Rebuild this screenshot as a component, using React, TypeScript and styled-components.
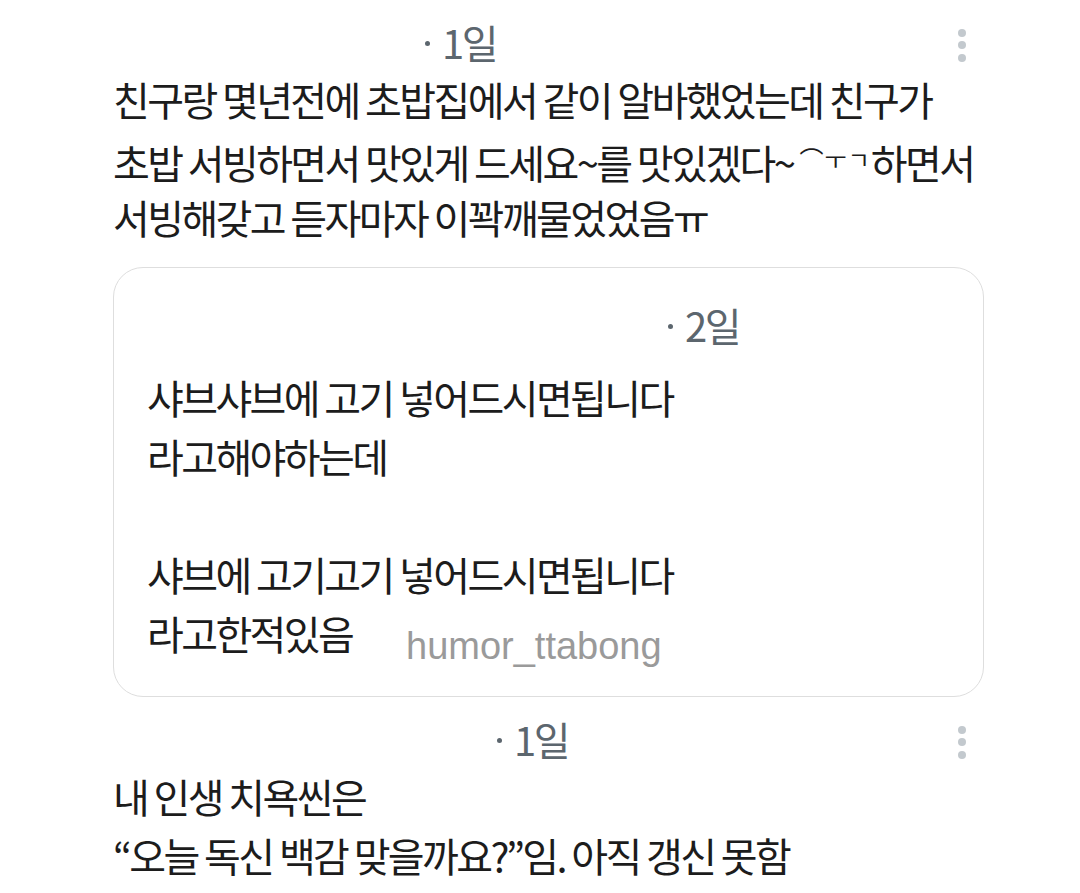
import React from "react";
import styled, { createGlobalStyle } from "styled-components";

const Global = createGlobalStyle`
  html, body { margin: 0; padding: 0; background: #ffffff; }
  body { font-family: "Noto Sans CJK KR", "Noto Sans", sans-serif; color: #1a1a1a; }
`;

const Page = styled.div`
  width: 1080px;
  height: 893px;
  overflow: hidden;
  box-sizing: border-box;
  padding: 14px 96px 0 113px;
  display: flex;
  flex-direction: column;
`;

const Comment = styled.section<{ $gap?: number }>`
  display: flex;
  flex-direction: column;
  margin-top: ${(p) => p.$gap ?? 0}px;
`;

const Header = styled.div`
  display: flex;
  align-items: center;
  height: 56px;
  padding-right: 18px;
`;

const Name = styled.span<{ $w: number }>`
  display: inline-block;
  width: ${(p) => p.$w}px;
  flex: none;
`;

const Time = styled.span`
  display: inline-flex;
  align-items: center;
  font-size: 40px;
  letter-spacing: -2.5px;
  color: #5c666e;
  line-height: 1;
`;

const Dot = styled.span`
  display: inline-block;
  width: 5px;
  height: 5px;
  border-radius: 50%;
  background: #5c666e;
  margin: 2px 12px 0 0;
`;

const More = styled.button`
  margin-left: auto;
  align-self: center;
  margin-top: 6px;
  border: 0;
  background: none;
  padding: 0;
  width: 8px;
  height: 33px;
  display: flex;
  flex-direction: column;
  justify-content: space-between;
  align-items: center;
`;

const Pip = styled.span`
  width: 8px;
  height: 8px;
  border-radius: 50%;
  background: #c3c9ce;
`;

const Body = styled.div`
  font-size: 40px;
  letter-spacing: -2.6px;
  line-height: 59px;
  color: #1c1c1c;
  white-space: nowrap;
`;

const Line = styled.div`
  height: 59px;
`;

const Small = styled.span`
  font-size: 24px;
  vertical-align: 10px;
  letter-spacing: 1px;
`;

const Card = styled.div`
  position: relative;
  margin-top: 20px;
  border: 1px solid #dedede;
  border-radius: 30px;
  padding: 29px 0 33px 33px;
  display: flex;
  flex-direction: column;
`;

const CardHeader = styled(Header)`
  margin-bottom: 15px;
`;

const Watermark = styled.span`
  position: absolute;
  left: 292px;
  top: 357px;
  font-family: "Liberation Sans", Arial, sans-serif;
  font-size: 38px;
  color: #9a9a9a;
  letter-spacing: 0;
`;

function Stamp({ name, label }: { name: number; label: string }) {
  return (
    <>
      <Name $w={name} />
      <Time>
        <Dot />
        {label}
      </Time>
    </>
  );
}

function Dots() {
  return (
    <More aria-label="more">
      <Pip />
      <Pip />
      <Pip />
    </More>
  );
}

export default function App() {
  return (
    <>
      <Global />
      <Page>
        <Comment>
          <Header>
            <Stamp name={312} label="1일" />
            <Dots />
          </Header>
          <Body>
            <Line>친구랑 몇년전에 초밥집에서 같이 알바했었는데 친구가</Line>
            <Line>
              초밥 서빙하면서 맛있게 드세요~를 맛있겠다~ <Small>⌒ㅜㄱ</Small>하면서
            </Line>
            <Line>서빙해갖고 듣자마자 이꽉깨물었었음ㅠ</Line>
          </Body>
        </Comment>

        <Card>
          <CardHeader>
            <Stamp name={521} label="2일" />
          </CardHeader>
          <Body>
            <Line>샤브샤브에 고기 넣어드시면됩니다</Line>
            <Line>라고해야하는데</Line>
            <Line />
            <Line>샤브에 고기고기 넣어드시면됩니다</Line>
            <Line>라고한적있음</Line>
          </Body>
          <Watermark>humor_ttabong</Watermark>
        </Card>

        <Comment $gap={14}>
          <Header>
            <Stamp name={384} label="1일" />
            <Dots />
          </Header>
          <Body>
            <Line>내 인생 치욕씬은</Line>
            <Line>“오늘 독신 백감 맞을까요?”임. 아직 갱신 못함</Line>
          </Body>
        </Comment>
      </Page>
    </>
  );
}
